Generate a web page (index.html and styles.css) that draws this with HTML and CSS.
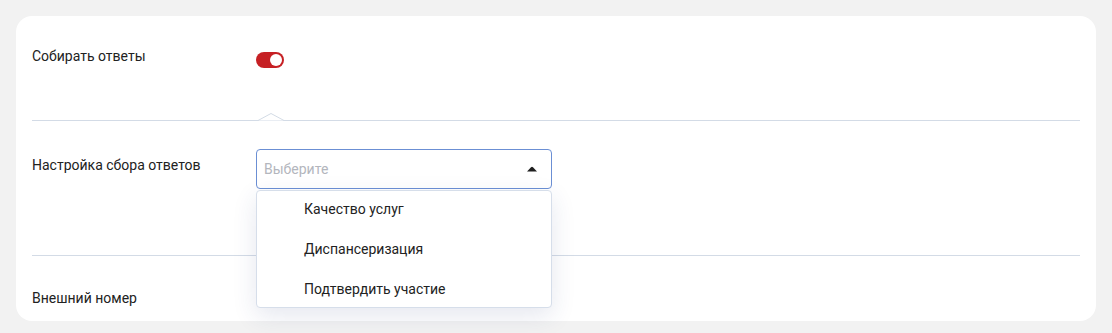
FILE: index.html
```html
<!DOCTYPE html>
<html lang="ru">
<head>
  <meta charset="UTF-8">
  <meta name="viewport" content="width=device-width, initial-scale=1.0">
  <title>Настройки опроса</title>
  <link rel="stylesheet" href="styles.css">
</head>
<body>
  <div class="card">
    <div class="row row-first">
      <div class="label">Собирать ответы</div>
      <div class="toggle on"><span class="knob"></span></div>
    </div>

    <div class="divider">
      <svg class="notch" width="26" height="8" viewBox="0 0 26 8">
        <path d="M0 7.5 L13 0.5 L26 7.5" fill="#fff" stroke="#d3dbe6" stroke-width="1"/>
      </svg>
    </div>

    <div class="row row-second">
      <div class="label label-pad">Настройка сбора ответов</div>
      <div class="select-wrap">
        <div class="select open">
          <span class="placeholder">Выберите</span>
          <svg class="caret" width="10" height="6" viewBox="0 0 10 6">
            <path d="M0 5.5 L4 1.2 Q5 0.2 6 1.2 L10 5.5 Z" fill="#1f1f1f"/>
          </svg>
        </div>
        <ul class="dropdown">
          <li>Качество услуг</li>
          <li>Диспансеризация</li>
          <li>Подтвердить участие</li>
        </ul>
      </div>
    </div>

    <div class="divider"></div>

    <div class="row row-third">
      <div class="label">Внешний номер</div>
    </div>
  </div>
</body>
</html>
```

FILE: styles.css
```css
body {
  margin: 0;
  padding: 16px;
  background: #f2f2f2;
  font-family: Roboto, "Noto Sans", Arial, sans-serif;
  font-size: 14px;
  line-height: 20px;
  color: #222;
}
.card {
  background: #fff;
  border-radius: 16px;
  padding: 0 16px;
  height: 305px;
  overflow: visible;
}
.row {
  display: flex;
  align-items: flex-start;
  box-sizing: border-box;
}
.row-first {
  height: 104px;
  padding-top: 30px;
}
.row-second {
  height: 134px;
  padding-top: 28px;
}
.row-third {
  height: 65px;
  padding-top: 32px;
}
.label {
  width: 224px;
  flex-shrink: 0;
}
.label-pad {
  padding-top: 6px;
}
.toggle {
  width: 28px;
  height: 16px;
  margin-top: 6px;
  border-radius: 8px;
  background: #c62024;
  display: flex;
  align-items: center;
  justify-content: flex-end;
  padding: 0 2px;
  box-sizing: border-box;
}
.knob {
  width: 12px;
  height: 12px;
  border-radius: 50%;
  background: #fff;
}
.divider {
  height: 1px;
  background: #d3dbe6;
  position: relative;
}
.notch {
  position: absolute;
  left: 226px;
  top: -7px;
}
.select-wrap {
  position: relative;
  width: 296px;
}
.select {
  height: 40px;
  box-sizing: border-box;
  border: 1px solid #6b8fd4;
  border-radius: 4px;
  padding: 0 14px 0 7px;
  display: flex;
  align-items: center;
  justify-content: space-between;
}
.placeholder {
  color: #b3b6bd;
}
.dropdown {
  position: absolute;
  top: 41px;
  left: 0;
  right: 0;
  margin: 0;
  padding: 0;
  list-style: none;
  background: #fff;
  border: 1px solid #d6deea;
  border-radius: 4px;
  box-shadow: 0 8px 24px rgba(40, 60, 120, 0.12);
  z-index: 2;
}
.dropdown li {
  padding: 8px 16px 12px 47px;
}
.dropdown li:last-child {
  padding-bottom: 8px;
}
```
